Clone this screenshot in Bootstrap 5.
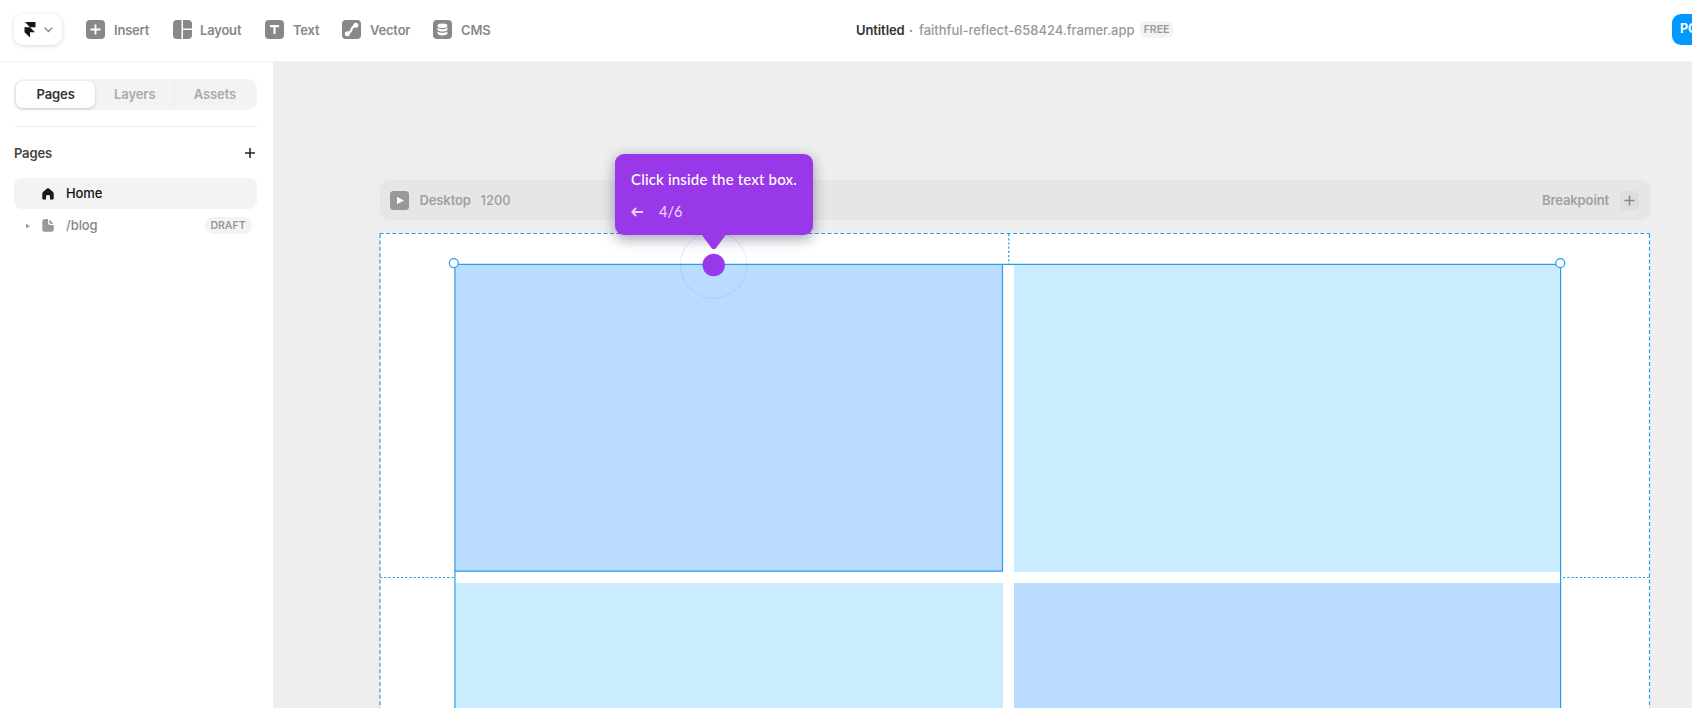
<!DOCTYPE html>
<html lang="en">
<head>
<meta charset="utf-8">
<meta name="viewport" content="width=device-width, initial-scale=1">
<title>Untitled</title>
<link href="https://cdn.jsdelivr.net/npm/bootstrap@5.3.0/dist/css/bootstrap.min.css" rel="stylesheet">
<style>
body{font-family:Inter,"Liberation Sans",sans-serif;font-size:13px;font-weight:500;line-height:20px;color:#333;background:#fff}
svg{display:block;flex:none}
.app{height:100vh}
.topbar{height:62px;padding-left:14px;padding-bottom:2px;border-bottom:1px solid #f5f5f5;position:relative}
.brand{width:48px;height:31px;border-radius:9px;box-shadow:0 1px 4px rgba(0,0,0,.16);padding-left:10px;gap:9px;margin-right:24px}
.brand svg+svg{margin-left:-1px}
.tool{gap:9px;color:#888;font-weight:600;letter-spacing:-.2px}
.project{margin-left:365px;white-space:nowrap;letter-spacing:-.1px}
.url{color:#999;letter-spacing:-.03px}
.pill{font-size:10.5px;line-height:17px;font-weight:600;color:#999;background:#f3f3f3;border-radius:6px;letter-spacing:0}
.publish{width:100px;height:31px;border-radius:9px;background:#09f;color:#fff;font-weight:700;padding-left:8px;line-height:30px;font-size:12.5px}
.sidebar{width:272.5px;padding:17px 16px 0 14px;flex:none}
.tabs{height:31px;padding:2px;border-radius:9px;background:#f3f3f3;color:#aaa;font-weight:600;letter-spacing:-.1px}
.tabs>div{flex:1;text-align:center;line-height:27px}
.tabs .on{background:#fff;color:#333;border-radius:7px;box-shadow:0 1px 3px rgba(0,0,0,.18)}
.tabs .sep{border-left:1px solid #ededed}
.tree-row{height:31px;border-radius:8px;margin-bottom:1px}
.stage{background:#eee;position:relative;padding:118px 0 0 107.5px}
.bp-head{width:1271px;height:40px;border-radius:10px;background:#e6e6e6;color:#a0a0a0;font-weight:600;letter-spacing:-.12px;padding:0 12px 0 10px}
.plusbox{width:19px;height:19px;border-radius:4px;background:#dedede}
.board{width:1270px;height:475px;margin-top:13px;background:#fff;padding:31px 88.5px 0 74.5px;border-radius:4px 4px 0 0}
.cells{display:grid;grid-template-columns:548px 547.5px;grid-template-rows:307.5px 130px;column-gap:11px;row-gap:11px;width:1106.5px}
.blue{background:#badcff}.sky{background:#cbecff}
.overlay{left:0;top:0;pointer-events:none}
.tip{left:615px;top:154px;width:198px;height:81px;border-radius:9px;background:#9938e8;color:#fff;font-family:Lato,"Open Sans",sans-serif;padding:14px 16px;box-shadow:0 4px 14px rgba(20,20,70,.4)}
.tip .msg{font-size:15px;line-height:22px;white-space:nowrap;letter-spacing:.17px}
.tip .step{gap:16px;margin-top:12px;font-size:14.5px;line-height:20px;color:#e6cffa}
</style>
</head>
<body>
<div class="app d-flex flex-column overflow-hidden position-relative">
<header class="topbar d-flex align-items-center flex-shrink-0">
  <div class="brand d-flex align-items-center">
    <svg width="12" height="16" viewBox="0 0 12 16" fill="#161616"><path d="M1 0h10.500v5.200H6zM0 5.200h6l5 5H6v5.300L.5 10.200V5.200z"/></svg>
    <svg width="9" height="6" viewBox="0 0 9 6" fill="none" stroke="#888" stroke-width="1.400" stroke-linecap="round"><path d="M1 1l3.500 3.500L8 1"/></svg>
  </div>
  <div class="tool d-flex align-items-center" style="width:87px"><svg width="19" height="19"><rect width="19" height="19" rx="4" fill="#888"/><path d="M9.500 4.500v10M4.500 9.500h10" stroke="#fff" stroke-width="1.800"/></svg>Insert</div>
  <div class="tool d-flex align-items-center" style="width:92px"><svg width="19" height="19" fill="#888" style="margin-right:-1px"><path d="M4 0h4.500v19H4a4 4 0 0 1-4-4V4a4 4 0 0 1 4-4zM10 0h5a4 4 0 0 1 4 4v4.500h-9zM10 10h9v5a4 4 0 0 1-4 4h-5z"/></svg>Layout</div>
  <div class="tool d-flex align-items-center" style="width:77px"><svg width="19" height="19"><rect width="19" height="19" rx="4" fill="#888"/><path d="M5 6.100h9M9.500 6v8" stroke="#fff" stroke-width="2.100"/></svg>Text</div>
  <div class="tool d-flex align-items-center" style="width:91px"><svg width="19" height="19"><rect width="19" height="19" rx="4" fill="#888"/><path d="M5.500 13.500Q8.800 12.300 9.500 9.500T13.500 5.500" stroke="#fff" stroke-width="2.200" fill="none"/><circle cx="5.300" cy="13.800" r="2.500" fill="#fff"/><circle cx="13.800" cy="5.300" r="2.500" fill="#fff"/></svg>Vector</div>
  <div class="tool d-flex align-items-center" style="width:58px"><svg width="19" height="19"><rect width="19" height="19" rx="4" fill="#888"/><ellipse cx="9.500" cy="5.800" rx="5" ry="2.300" fill="#fff"/><path d="M4.500 7.600c1.500 2.100 8.500 2.100 10 0v2.100c-1 2.400-9 2.400-10 0zM4.500 11.200c1.500 2.100 8.500 2.100 10 0v2.100c-1 2.900-9 2.900-10 0z" fill="#fff"/></svg>CMS</div>
  <div class="project d-flex align-items-center"><span class="fw-semibold" style="width:47px">Untitled</span><span class="text-center text-secondary" style="width:16px">·</span><span class="url" style="width:221px">faithful-reflect-658424.framer.app</span><span class="pill text-center" style="width:33px">FREE</span></div>
  <div class="publish ms-auto flex-shrink-0" style="margin-right:-80px">PO</div>
</header>
<div class="d-flex flex-grow-1">
  <aside class="sidebar">
    <div class="tabs d-flex"><div class="on">Pages</div><div>Layers</div><div class="sep">Assets</div></div>
    <div class="border-top" style="margin-top:16px;border-color:#eee!important"></div>
    <div class="d-flex justify-content-between align-items-center" style="height:51px"><span class="fw-semibold" style="color:#444;letter-spacing:-.15px">Pages</span><svg width="12" height="12" style="margin-right:1px"><path d="M6 1v10M1 6h10" stroke="#222" stroke-width="1.500"/></svg></div>
    <div class="tree-row d-flex align-items-center" style="background:#f3f3f3;padding-left:28px;color:#111"><svg width="12" height="12" viewBox="0 0 12 12"><path d="M5 .6Q6 0 7 .6l4 3.300q.7.600.7 1.500V10.500q0 1.100-1.100 1.100H8V8.400Q8 7 6 7T4 8.400v3.200H1.400Q.3 11.600.3 10.500V5.400q0-.900.7-1.500z" fill="#181818"/></svg><span style="margin-left:12px;margin-top:-1px;letter-spacing:-.1px">Home</span></div>
    <div class="tree-row d-flex align-items-center" style="padding:0 5px 0 12px;color:#888"><svg width="5" height="6"><path d="M0 .8L4 3 0 5.200z" fill="#999"/></svg><svg width="12" height="13" viewBox="0 0 12 13" style="margin-left:11px"><path d="M2.500 0H6v4q0 2 2 2h3.700v4.500q0 2.200-2.200 2.200h-7Q.3 12.700.3 10.500v-8Q.3 0 2.500 0zM7.300.3L11.300 4.700H8.500Q7.300 4.700 7.300 3.500z" fill="#999"/></svg><span style="margin-left:12px;margin-top:-1px;letter-spacing:-.1px">/blog</span><span class="pill ms-auto rounded-pill text-center" style="width:47px">DRAFT</span></div>
  </aside>
  <main class="stage flex-grow-1">
    <div class="bp-head d-flex align-items-center"><svg width="19" height="19"><rect width="19" height="19" rx="3.500" fill="#999"/><path d="M7 5.700L14 9.500 7 13.300z" fill="#fff"/></svg><span style="margin-left:10.500px;width:61px">Desktop</span><span class="fw-medium" style="letter-spacing:0">1200</span><span class="ms-auto" style="margin-right:11px">Breakpoint</span><div class="plusbox d-flex align-items-center justify-content-center"><svg width="11" height="11"><path d="M5.500 .5v10M.5 5.500h10" stroke="#888" stroke-width="1.500"/></svg></div></div>
    <div class="board"><div class="cells"><div class="blue"></div><div class="sky"></div><div class="sky"></div><div class="blue"></div></div></div>
  </main>
</div>
<svg class="overlay position-absolute" width="1692" height="708" fill="none" stroke="#2b9de8" stroke-width="1.200">
  <path d="M379.500 233.500H1650" stroke-dasharray="4 2.400"/><path d="M380 234V708M1649.500 234V708" stroke-dasharray="4 2.400"/>
  <path d="M1008.700 234V264M380 577.500H454M1563 577.500H1650" stroke-dasharray="2.200 2"/>
  <path d="M454.900 708V264.400H1560.600V708M1002.500 264.400V571.200H454.900"/>
  <g fill="#fff"><circle cx="453.800" cy="263.100" r="4.500"/><circle cx="1560.300" cy="263.100" r="4.500"/></g>
  <circle cx="713.700" cy="265" r="33.300" stroke="#7060a0" stroke-opacity=".15" stroke-width="1"/>
</svg>
<div class="tip position-absolute"><div class="msg">Click inside the text box.</div><div class="step d-flex align-items-center"><svg width="12" height="10" fill="none" stroke="#e6cffa" stroke-width="1.900"><path d="M5 1L1.300 5 5 9M1.500 5H12"/></svg>4/6</div></div>
<svg class="overlay position-absolute" width="1692" height="708" fill="#9938e8"><path d="M701.500 234.500h24.500l-9.700 13.200q-2.500 3-5 0z"/><circle cx="713.700" cy="265" r="11.200"/></svg>
</div>
<script src="https://cdn.jsdelivr.net/npm/bootstrap@5.3.0/dist/js/bootstrap.bundle.min.js"></script>
</body>
</html>
